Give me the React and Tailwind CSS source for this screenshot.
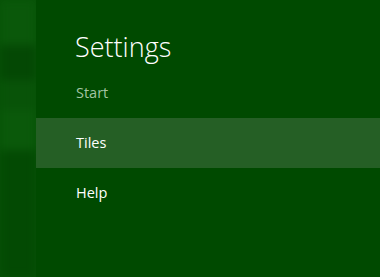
import React from 'react';

const items = [
  { label: 'Start', muted: true },
  { label: 'Tiles', active: true },
  { label: 'Help' },
];

export default function App() {
  return (
    <div className="flex w-[380px] h-[277px] overflow-hidden bg-[#004a00] font-['Open_Sans',sans-serif]">
      {/* start screen peeking from behind */}
      <div className="w-[36px] shrink-0 overflow-hidden bg-[#075207]">
        <div className="flex flex-col h-full blur-[4px]">
          <div className="h-[45px] bg-[#0a580a]" />
          <div className="h-[35px] bg-[#044804]" />
          <div className="h-[30px] bg-[#085308]" />
          <div className="h-[40px] bg-[#0a590a]" />
          <div className="flex-1 bg-[#034a03]" />
        </div>
      </div>

      <div className="flex-1 flex flex-col pt-[30px]">
        <h1 className="pl-[39px] text-[27px] leading-[34px] font-light text-white">Settings</h1>
        <div className="mt-[4px] flex flex-col">
          {items.map((it) => (
            <div
              key={it.label}
              className={`h-[50px] flex items-center pl-[40px] text-[14.5px] ${
                it.active ? 'bg-[#255f25] text-white' : it.muted ? 'text-[#a3c4a3]' : 'text-white'
              }`}
            >
              {it.label}
            </div>
          ))}
        </div>
      </div>
    </div>
  );
}
